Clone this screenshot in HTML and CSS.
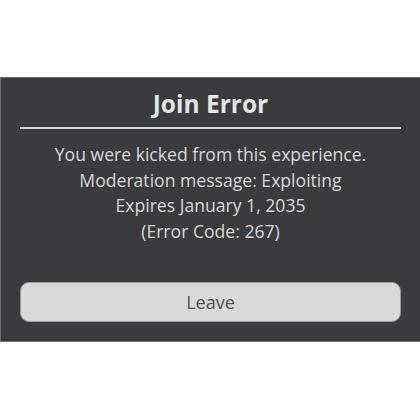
FILE: index.html
```html
<!DOCTYPE html>
<html>
<head>
<meta charset="utf-8">
<link rel="stylesheet" href="styles.css">
</head>
<body>
<div class="page">
  <div class="dialog">
    <div class="title">Join Error</div>
    <div class="divider"></div>
    <div class="message">
      <div>You were kicked from this experience.</div>
      <div>Moderation message: Exploiting</div>
      <div>Expires January 1, 2035</div>
      <div>(Error Code: 267)</div>
    </div>
    <div class="button">Leave</div>
  </div>
</div>
</body>
</html>
```

FILE: styles.css
```css
html, body {
  margin: 0;
  padding: 0;
  background: #ffffff;
}
.page {
  width: 420px;
  height: 420px;
  padding-top: 77px;
  box-sizing: border-box;
  font-family: "Open Sans", "Noto Sans", sans-serif;
}
.dialog {
  height: 265px;
  box-sizing: border-box;
  background: #393b3d;
  border: 1px solid #6d6e70;
  border-right: none;
  display: flex;
  flex-direction: column;
  align-items: stretch;
  padding: 0 19px 0 19px;
}
.title {
  color: #e4e4e4;
  font-weight: 700;
  font-size: 24.5px;
  line-height: 32px;
  text-align: center;
  margin-top: 10px;
}
.divider {
  height: 2px;
  background: #d4d4d4;
  margin-top: 7px;
}
.message {
  color: #d8d8d8;
  font-size: 17.6px;
  line-height: 25.5px;
  text-align: center;
  margin-top: 13px;
}
.button {
  margin-top: auto;
  margin-bottom: 19px;
  height: 40px;
  box-sizing: border-box;
  background: #d9d9d9;
  border: 1px solid #9a9a9a;
  border-radius: 9px;
  color: #4f4f4f;
  font-size: 18px;
  display: flex;
  align-items: center;
  justify-content: center;
}
```
